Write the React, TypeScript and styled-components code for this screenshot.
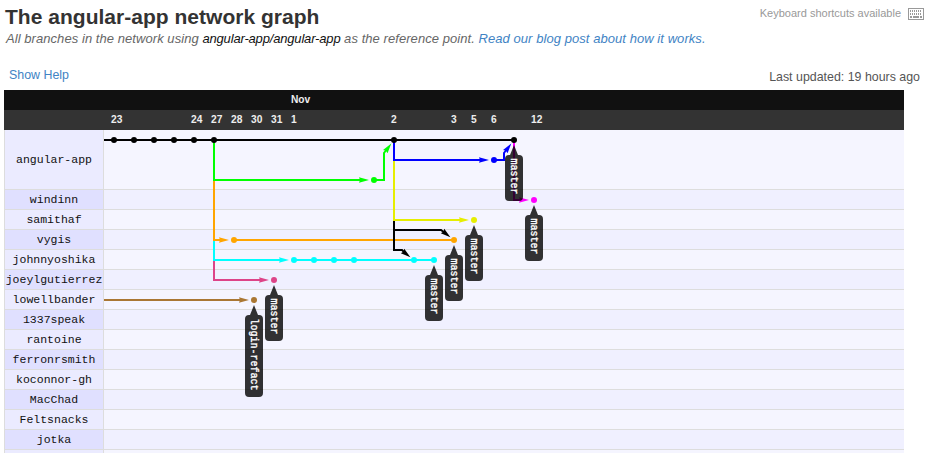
import React from "react";
import styled, { createGlobalStyle } from "styled-components";

const Global = createGlobalStyle`
  * { box-sizing: border-box; }
  html, body { margin: 0; padding: 0; background: #fff; overflow: hidden; }
  body { font-family: "Liberation Sans", Arial, sans-serif; color: #333; }
`;

const Page = styled.main`
  width: 937px;
  height: 453px;
  overflow: hidden;
  display: flex;
  flex-direction: column;
`;

const Header = styled.header`
  display: flex;
  flex: none;
  justify-content: space-between;
  height: 67px;
  padding: 5px 13px 0 5px;
`;

const Title = styled.h1`
  margin: 0;
  font-size: 21px;
  line-height: 24px;
  font-weight: bold;
  letter-spacing: 0.02px;
  white-space: nowrap;
`;

const Subtitle = styled.p`
  margin: 1px 0 0 1px;
  font-size: 13px;
  line-height: 18px;
  font-style: italic;
  letter-spacing: 0.06px;
  color: #666;
  white-space: nowrap;
`;

const RepoName = styled.span`
  letter-spacing: -0.17px;
  color: #111;
`;

const Link = styled.a`
  color: #4183c4;
  text-decoration: none;
`;

const Shortcuts = styled.div`
  display: flex;
  align-items: flex-start;
  gap: 7px;
  height: 20px;
  font-size: 11px;
  line-height: 17px;
  color: #999;
  white-space: nowrap;

  svg { margin-top: 3px; }
`;

const MetaBar = styled.div`
  display: flex;
  flex: none;
  justify-content: space-between;
  height: 23px;
  padding: 0 17px 0 9px;
  font-size: 12.4px;
  line-height: 16px;
  white-space: nowrap;
`;

const Updated = styled.span`
  padding-top: 2px;
  color: #555;
`;

const Network = styled.section`
  flex: none;
  width: 900px;
  margin-left: 4px;
`;

const Timeline = styled.div<{ $tone: string }>`
  display: grid;
  grid-template-columns: repeat(40, 20px);
  height: 20px;
  padding-left: 100px;
  background: ${(p) => p.$tone};
`;

const Tick = styled.span<{ $col: number }>`
  grid-column: ${(p) => p.$col};
  grid-row: 1;
  padding-left: 7px;
  font-size: 10.2px;
  line-height: 20px;
  font-weight: bold;
  color: #eee;
  white-space: nowrap;
`;

const Board = styled.div`
  position: relative;
`;

const Row = styled.div<{ $tall?: boolean; $alt: boolean }>`
  display: grid;
  grid-template-columns: 100px 1fr;
  height: ${(p) => (p.$tall ? 60 : 20)}px;
  background: ${(p) => (p.$alt ? "#f0f0ff" : "#f5f5ff")};
  border-bottom: 1px solid #ddd;
`;

const Owner = styled.div<{ $alt: boolean }>`
  display: flex;
  align-items: center;
  justify-content: center;
  border-left: 1px solid #ddd;
  border-right: 1px solid #ddd;
  background: ${(p) => (p.$alt ? "#e0e0ff" : "#ebebff")};
  font-family: "Liberation Mono", "Courier New", monospace;
  font-size: 11.5px;
  line-height: 18px;
  color: #111;
`;

/* Commit graph drawn on top of the owner rows */
const Canvas = styled.svg`
  position: absolute;
  left: 100px;
  top: 0;
`;

const TagText = styled.text`
  font-family: "Liberation Mono", monospace;
  font-size: 10px;
  fill: #fff;
  stroke: #fff;
  stroke-width: 0.35px;
`;

const days: [number, string][] = [
  [1, "23"], [5, "24"], [6, "27"], [7, "28"], [8, "30"], [9, "31"], [10, "1"],
  [15, "2"], [18, "3"], [19, "5"], [20, "6"], [22, "12"],
];

const owners = [
  "angular-app", "windinn", "samithaf", "vygis", "johnnyoshika", "joeylgutierrez",
  "lowellbander", "1337speak", "rantoine", "ferronrsmith", "koconnor-gh", "MacChad",
  "Feltsnacks", "jotka", "",
];

const BLACK = "#000";
const GREEN = "#00ff00";
const ORANGE = "#ffa500";
const CYAN = "#00ffff";
const PINK = "#dd4488";
const BROWN = "#aa7733";
const BLUE = "#0000ff";
const YELLOW = "#e6ee00";
const MAGENTA = "#ff00ff";

const lines: [string, string][] = [
  ["M214 260V280H262", PINK],
  ["M214 240V260H282", CYAN],
  ["M294 260H434", CYAN],
  ["M214 180V240H222", ORANGE],
  ["M234 240H454", ORANGE],
  ["M214 140V180H362", GREEN],
  ["M374 180H384V153L387 149", GREEN],
  ["M104 300H242", BROWN],
  ["M394 220V250H402L405 253", BLACK],
  ["M394 230H441L445 233", BLACK],
  ["M394 140V220H462", YELLOW],
  ["M394 140V160H482", BLUE],
  ["M494 160H504V153L507 149", BLUE],
  ["M514 140V200H522", MAGENTA],
  ["M104 140H514", BLACK],
];

/* tip x, tip y, rotation, colour */
const arrows: [number, number, number, string][] = [
  [369, 180, 0, GREEN],
  [391.3, 143.6, -53, GREEN],
  [229, 240, 0, ORANGE],
  [289, 260, 0, CYAN],
  [269, 280, 0, PINK],
  [249, 300, 0, BROWN],
  [469, 220, 0, YELLOW],
  [489, 160, 0, BLUE],
  [511.3, 143.6, -53, BLUE],
  [529, 200, 0, MAGENTA],
  [450.4, 237.2, 38, BLACK],
  [410.4, 257.2, 38, BLACK],
];

const commits: [number, number, string][] = [
  [114, 140, BLACK], [134, 140, BLACK], [154, 140, BLACK], [174, 140, BLACK],
  [194, 140, BLACK], [214, 140, BLACK], [394, 140, BLACK], [514, 140, BLACK],
  [374, 180, GREEN], [494, 160, BLUE], [534, 200, MAGENTA], [474, 220, YELLOW],
  [234, 240, ORANGE], [454, 240, ORANGE], [294, 260, CYAN], [314, 260, CYAN],
  [334, 260, CYAN], [354, 260, CYAN], [414, 260, CYAN], [434, 260, CYAN],
  [274, 280, PINK], [254, 300, BROWN],
];

const tags: [number, number, string][] = [
  [514, 140, "master"], [534, 200, "master"], [474, 220, "master"],
  [454, 240, "master"], [434, 260, "master"], [274, 280, "master"],
  [254, 300, "login-refact"],
];

function KeyboardIcon() {
  return (
    <svg width="16" height="12" viewBox="0 0 16 12" shapeRendering="crispEdges">
      <rect x="0.5" y="0.5" width="15" height="11" fill="#fff" stroke="#999" />
      <path d="M2 3H14" stroke="#999" strokeWidth="2" strokeDasharray="1.4 0.6" />
      <path d="M2 6H14" stroke="#999" strokeWidth="1.6" strokeDasharray="1 1" />
      <path d="M2 9H4M5 9H11M12 9H14" stroke="#999" strokeWidth="2" />
    </svg>
  );
}

function Tag({ x, y, name }: { x: number; y: number; name: string }) {
  const h = name.length * 6 + 10;
  return (
    <g transform={`translate(${x} ${y})`}>
      <path
        d={`M0 5L4 15H5Q9 15 9 19V${11 + h}Q9 ${15 + h} 5 ${15 + h}H-5Q-9 ${15 + h} -9 ${11 + h}V19Q-9 15 -5 15H-4Z`}
        fill="#000"
        fillOpacity="0.8"
      />
      <TagText transform="translate(-3 18.5) rotate(90)">{name}</TagText>
    </g>
  );
}

export default function App() {
  return (
    <Page>
      <Global />
      <Header>
        <div>
          <Title>The angular-app network graph</Title>
          <Subtitle>
            All branches in the network using <RepoName>angular-app/angular-app</RepoName> as the
            reference point. <Link>Read our blog post about how it works.</Link>
          </Subtitle>
        </div>
        <Shortcuts>
          Keyboard shortcuts available
          <KeyboardIcon />
        </Shortcuts>
      </Header>
      <MetaBar>
        <Link>Show Help</Link>
        <Updated>Last updated: 19 hours ago</Updated>
      </MetaBar>
      <Network>
        <Timeline $tone="#111">
          <Tick $col={10}>Nov</Tick>
        </Timeline>
        <Timeline $tone="#333">
          {days.map(([col, label]) => (
            <Tick key={col} $col={col}>{label}</Tick>
          ))}
        </Timeline>
        <Board>
          {owners.map((name, i) => (
            <Row key={i} $tall={i === 0} $alt={i % 2 === 1}>
              <Owner $alt={i % 2 === 1}>{name}</Owner>
            </Row>
          ))}
          <Canvas width="800" height="323" viewBox="104 130 800 323">
            {lines.map(([d, color], i) => (
              <path key={i} d={d} fill="none" stroke={color} strokeWidth="2" />
            ))}
            {arrows.map(([x, y, angle, color], i) => (
              <path
                key={i}
                d="M0 0L-10 -2.8L-9 0L-10 2.8Z"
                fill={color}
                transform={`translate(${x} ${y}) rotate(${angle})`}
              />
            ))}
            {commits.map(([x, y, color], i) => (
              <circle key={i} cx={x} cy={y} r="3" fill={color} />
            ))}
            {tags.map(([x, y, name], i) => (
              <Tag key={i} x={x} y={y} name={name} />
            ))}
          </Canvas>
        </Board>
      </Network>
    </Page>
  );
}
